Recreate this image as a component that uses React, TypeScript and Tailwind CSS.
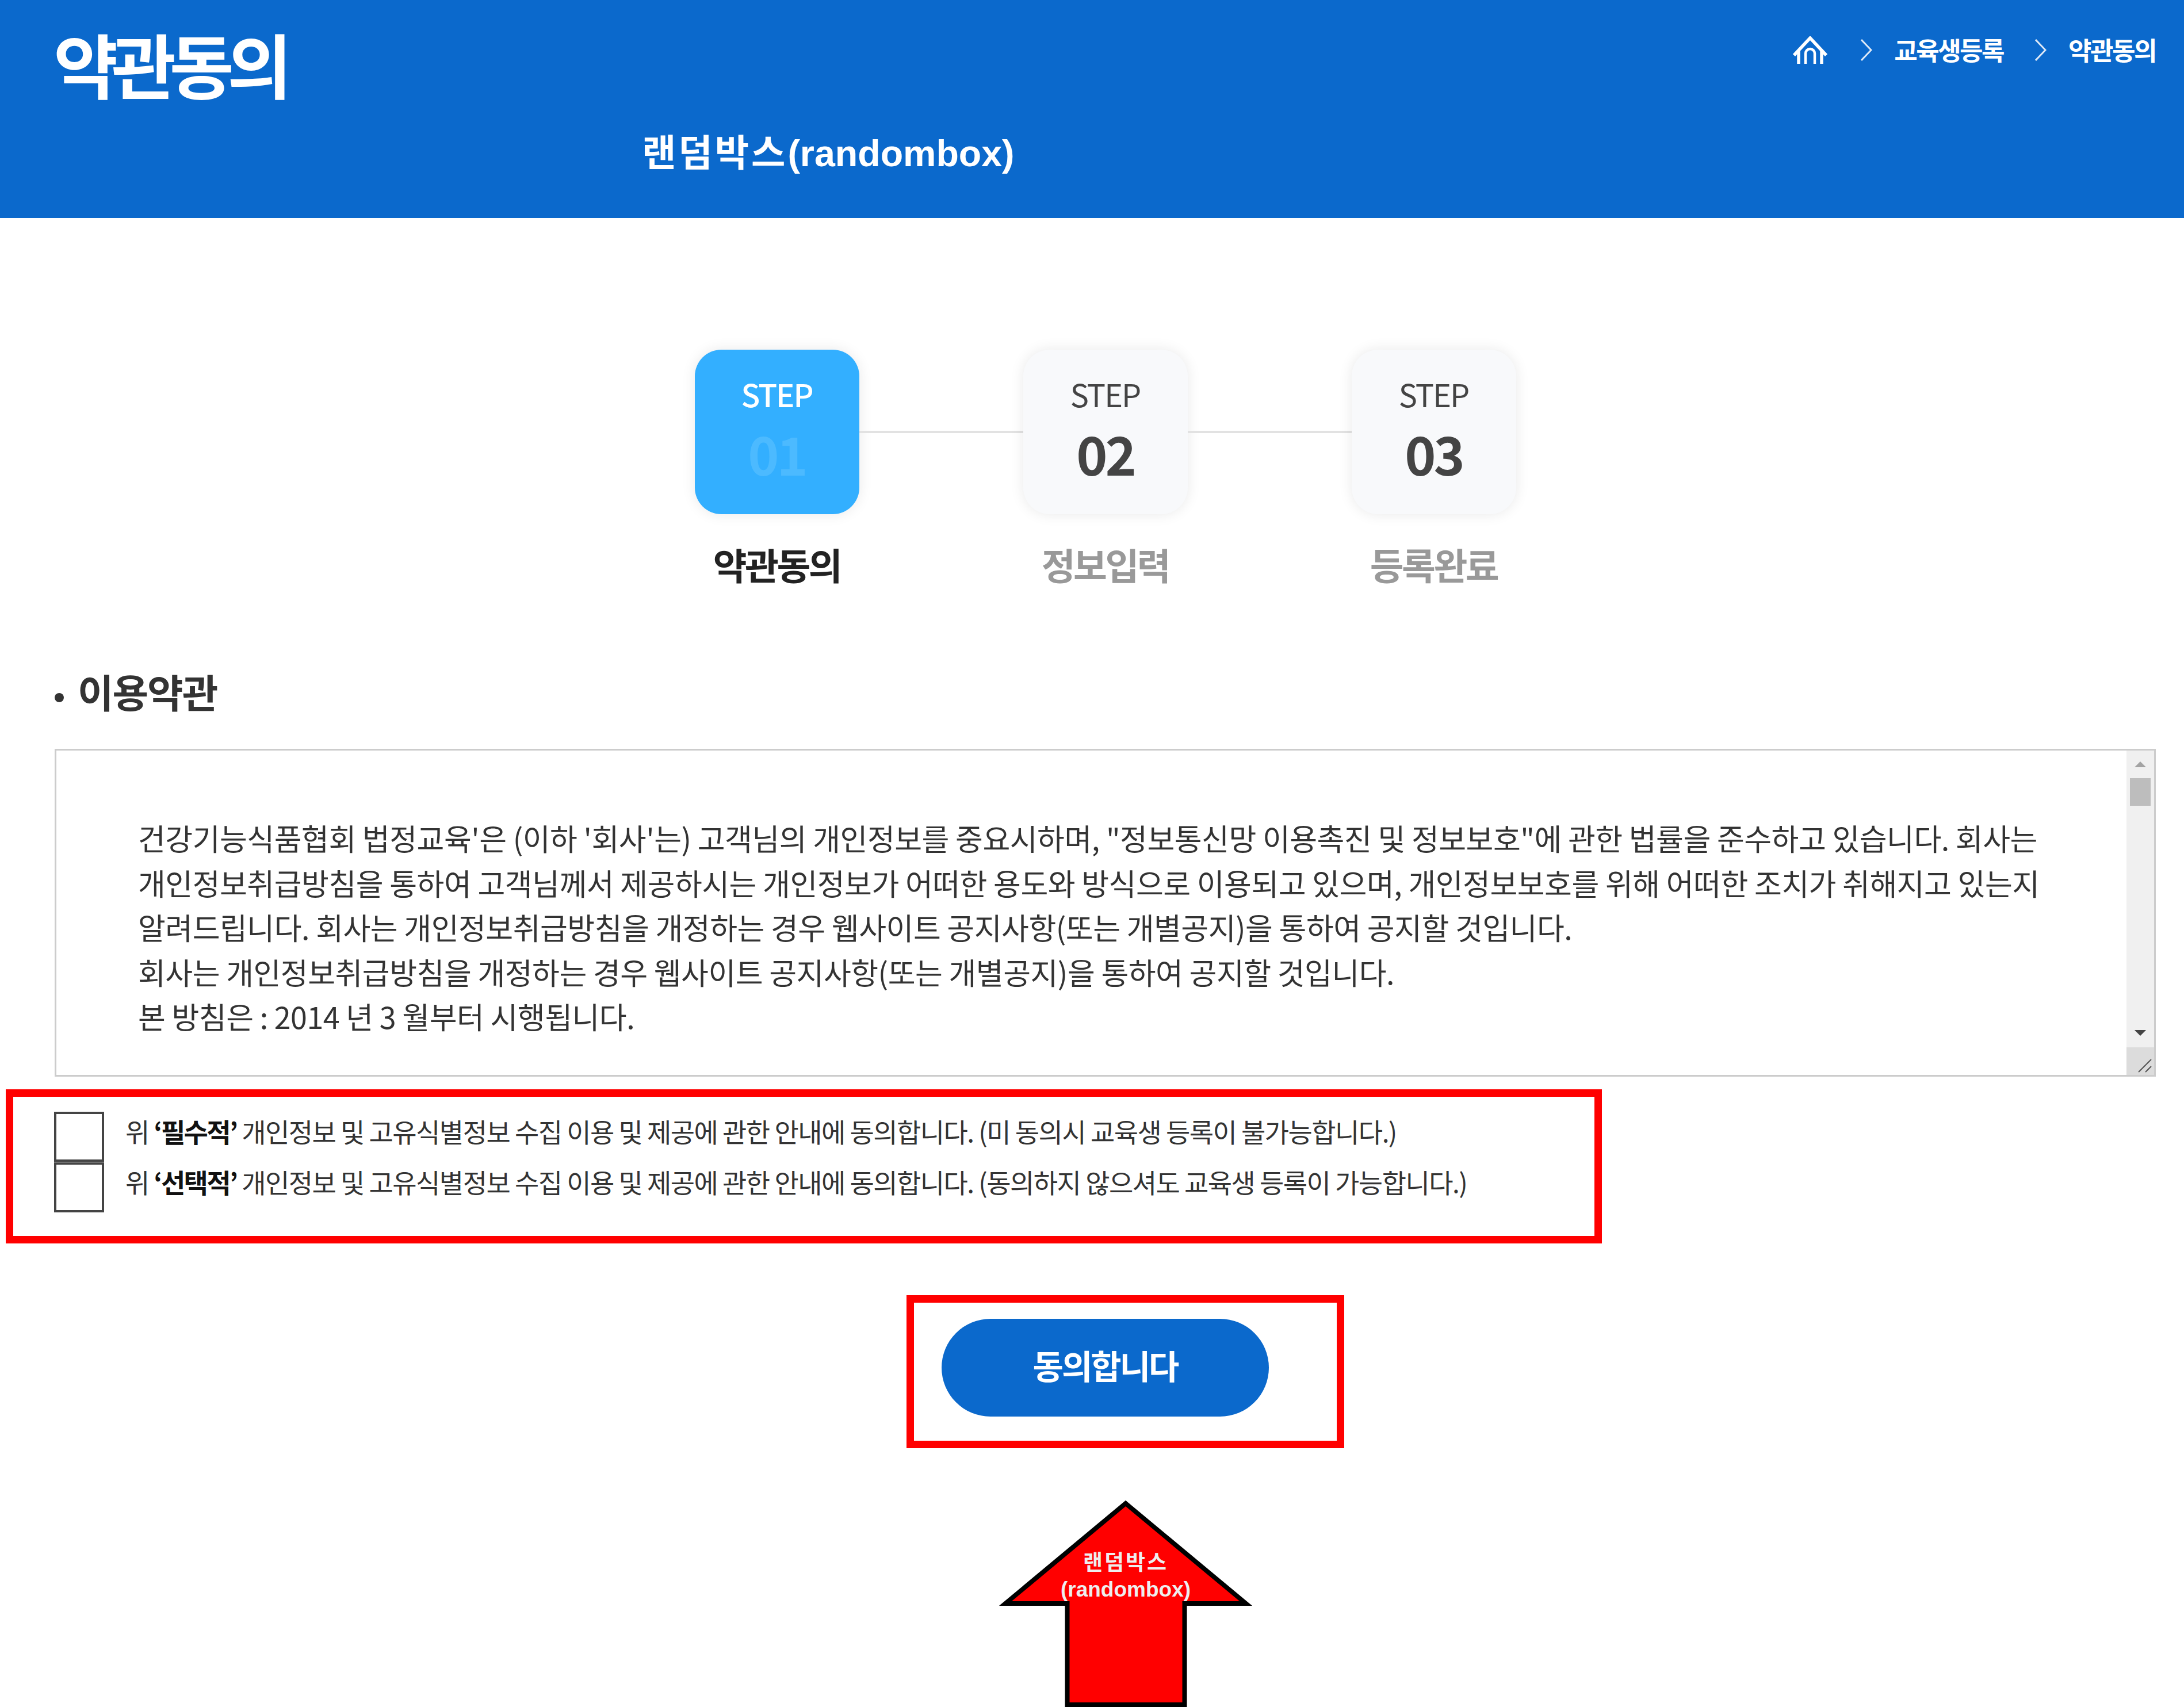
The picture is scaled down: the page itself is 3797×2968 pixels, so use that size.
import React from "react";

const FONT = "font-['Noto_Sans_CJK_KR',sans-serif]";

const HomeIcon = () => (
  <svg width="60" height="48" viewBox="0 0 60 48" fill="none" stroke="white" strokeWidth="5.5">
    <path d="M2 33 L30 3 L58 33" />
    <path d="M10 24 V48 M50 24 V48" />
    <path d="M22 48 V30 a8 8 0 0 1 16 0 V48" strokeWidth="4.5" />
  </svg>
);

const Chevron = () => (
  <svg width="20" height="38" viewBox="0 0 20 38" fill="none" stroke="#dbe7f6" strokeWidth="3">
    <path d="M1 1 L18 19 L1 37" />
  </svg>
);

const steps = [
  { num: "01", label: "약관동의", active: true },
  { num: "02", label: "정보입력", active: false },
  { num: "03", label: "등록완료", active: false },
];

const Step = ({ num, label, active }: { num: string; label: string; active: boolean }) => (
  <div className="flex flex-col items-center w-[286px]">
    <div
      className={`w-[286px] h-[286px] rounded-[46px] flex flex-col items-center shadow-[0_0_24px_rgba(0,0,0,0.09)] ${
        active ? "bg-[#33afff]" : "bg-[#f8f9fb]"
      }`}
    >
      <div
        className={`mt-[45px] h-[64px] leading-[64px] text-[54px] tracking-[-2px] ${
          active ? "text-white font-medium" : "text-[#444444]"
        }`}
      >
        STEP
      </div>
      <div
        className={`mt-[20px] h-[100px] leading-[100px] text-[92px] font-bold tracking-[-4px] ${
          active ? "text-[#4cbaff]" : "text-[#444444]"
        }`}
      >
        {num}
      </div>
    </div>
    <div
      className={`mt-[50px] h-[72px] leading-[72px] text-[64px] font-bold tracking-[-3.5px] whitespace-nowrap ${
        active ? "text-[#222222]" : "text-[#999999]"
      }`}
    >
      {label}
    </div>
  </div>
);

const Connector = () => <div className="w-[285px] h-[4px] mt-[141px] bg-[#e2e2e2]" />;

const termsLines = [
  "건강기능식품협회 법정교육'은 (이하 '회사'는) 고객님의 개인정보를 중요시하며, \"정보통신망 이용촉진 및 정보보호\"에 관한 법률을 준수하고 있습니다. 회사는",
  "개인정보취급방침을 통하여 고객님께서 제공하시는 개인정보가 어떠한 용도와 방식으로 이용되고 있으며, 개인정보보호를 위해 어떠한 조치가 취해지고 있는지",
  "알려드립니다. 회사는 개인정보취급방침을 개정하는 경우 웹사이트 공지사항(또는 개별공지)을 통하여 공지할 것입니다.",
  "회사는 개인정보취급방침을 개정하는 경우 웹사이트 공지사항(또는 개별공지)을 통하여 공지할 것입니다.",
  "본 방침은 : 2014 년 3 월부터 시행됩니다.",
];

const AgreeRow = ({ strong, rest }: { strong: string; rest: string }) => (
  <div className="flex items-center h-[87px]">
    <div className="w-[87px] h-[87px] border-[4px] border-[#444444] bg-white" />
    <div className="ml-[37px] pb-[20px] text-[46px] tracking-[-1.55px] text-[#333333] whitespace-nowrap">
      위 <b className="text-[#111111] tracking-[-2.6px]">‘{strong}’</b> {rest}
    </div>
  </div>
);

export default function App() {
  return (
    <div className={`w-[3797px] h-[2968px] overflow-hidden bg-white flex flex-col ${FONT}`}>
      {/* Header */}
      <header className="h-[379px] shrink-0 bg-[#0b69cc] text-white flex justify-between pl-[95px] pr-[49px]">
        <div>
          <h1 className="mt-[39px] -ml-[2px] h-[140px] leading-[140px] text-[122px] font-bold tracking-[-11.5px]">약관동의</h1>
          <div className="ml-[1021px] mt-[48px] h-[80px] leading-[80px] text-[64.5px] font-bold whitespace-nowrap font-['Liberation_Sans','Noto_Sans_CJK_KR',sans-serif]">
            <span className="tracking-[4px]">랜덤박스</span>(randombox)
          </div>
        </div>
        <div className="flex items-center h-[48px] mt-[63px]">
          <HomeIcon />
          <div className="ml-[58px]"><Chevron /></div>
          <span className="ml-[38px] pb-[3px] text-[44px] font-bold tracking-[-2.5px]">교육생등록</span>
          <div className="ml-[55px]"><Chevron /></div>
          <span className="ml-[38px] pb-[3px] text-[44px] font-bold tracking-[-2.5px]">약관동의</span>
        </div>
      </header>

      <main className="flex flex-col pl-[95px] pr-[49px]">
        {/* Steps */}
        <div className="mt-[229px] flex justify-center items-start">
          <Step {...steps[0]} />
          <Connector />
          <Step {...steps[1]} />
          <Connector />
          <Step {...steps[2]} />
        </div>

        {/* Terms */}
        <div className="mt-[148px] h-[80px] flex items-center">
          <div className="w-[16px] h-[16px] rounded-full bg-[#333333] mt-[18px]" />
          <h2 className="ml-[24px] pb-[4px] text-[68px] font-bold tracking-[-2px] text-[#333333]">이용약관</h2>
        </div>
        <div className="mt-[58px] h-[570px] border-[3px] border-[#cccccc] flex">
          <div className="flex-1 pl-[142px] pt-[113px] text-[52px] leading-[77.5px] text-[#333333] tracking-[-0.5px] overflow-hidden">
            {termsLines.map((line) => (
              <div key={line} className="whitespace-nowrap">{line}</div>
            ))}
          </div>
          <div className="w-[48px] flex flex-col bg-[#f0f0f0]">
            <div className="h-[48px] flex items-center justify-center">
              <div className="w-0 h-0 border-x-[10px] border-x-transparent border-b-[10px] border-b-[#a3a3a3]" />
            </div>
            <div className="mx-[6px] h-[48px] bg-[#bdbdbd]" />
            <div className="flex-1 flex items-end justify-center pb-[20px]">
              <div className="w-0 h-0 border-x-[10px] border-x-transparent border-t-[10px] border-t-[#444444]" />
            </div>
            <div className="h-[48px] bg-[#dcdcdc] flex items-end justify-end p-[3px]">
              <svg width="26" height="26" viewBox="0 0 26 26" fill="none" stroke="#555555" strokeWidth="2">
                <path d="M2 24 L24 2 M14 24 L24 14" />
              </svg>
            </div>
          </div>
        </div>

        {/* Agree checks */}
        <div className="mt-[22px] -ml-[85px] w-[2775px] h-[268px] border-[13px] border-[#ff0000] pt-[26px] pl-[71px] flex flex-col gap-[1px]">
          <AgreeRow strong="필수적" rest="개인정보 및 고유식별정보 수집 이용 및 제공에 관한 안내에 동의합니다. (미 동의시 교육생 등록이 불가능합니다.)" />
          <AgreeRow strong="선택적" rest="개인정보 및 고유식별정보 수집 이용 및 제공에 관한 안내에 동의합니다. (동의하지 않으셔도 교육생 등록이 가능합니다.)" />
        </div>

        {/* Agree button */}
        <div className="mt-[90px] ml-[1481px] w-[761px] h-[266px] border-[13px] border-[#ff0000] pt-[28px] pl-[48px]">
          <button className="w-[569px] h-[170px] pb-[10px] rounded-full bg-[#0b69cc] text-white text-[58px] font-bold tracking-[-3px]">
            동의합니다
          </button>
        </div>

        {/* Arrow */}
        <div className="relative mt-[88px] ml-[1635px] w-[454px] h-[362px]">
          <svg width="454" height="362" viewBox="0 0 454 362">
            <polygon
              points="227,8 436,182 329.5,182 329.5,358 125.5,358 125.5,182 18,182"
              fill="#ff0000"
              stroke="#000000"
              strokeWidth="8"
            />
          </svg>
          <div className="absolute left-0 top-[89px] w-full text-center text-[#eeeeee] text-[37px] font-bold leading-[46px] font-['Liberation_Sans','Noto_Sans_CJK_KR',sans-serif]">
            <span className="tracking-[3px]">랜덤박스</span>
            <br />
            (randombox)
          </div>
        </div>
      </main>
    </div>
  );
}
